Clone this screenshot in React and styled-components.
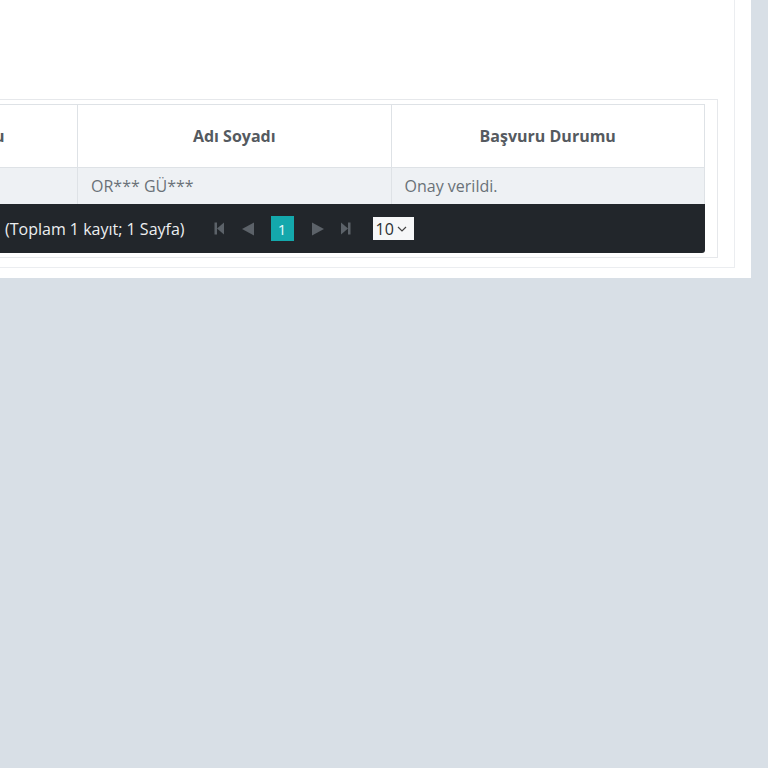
import React from "react";
import styled, { createGlobalStyle } from "styled-components";

const Global = createGlobalStyle`
  html, body { margin: 0; padding: 0; }
  body {
    background: #d8dfe6;
    font-family: "Open Sans", "Noto Sans", sans-serif;
    overflow: hidden;
    width: 768px;
    height: 768px;
  }
`;

const Page = styled.div`
  display: flex;
  align-items: flex-start;
  width: 768px;
  height: 768px;
  overflow: hidden;
`;

const Card = styled.div`
  flex: none;
  width: 976px;
  margin-left: -225px;
  margin-top: -20px;
  background: #fff;
  padding: 0 16px 10px 16px;
  box-sizing: border-box;
`;

const Inner = styled.div`
  border-right: 1px solid #ebedf0;
  border-bottom: 1px solid #ebedf0;
  padding: 119px 16px 9px 16px;
`;

const Wrapper = styled.div`
  border: 1px solid #e6e8eb;
  padding: 4px 12px 4px 12px;
`;

const Table = styled.table`
  width: 100%;
  border-collapse: collapse;
  table-layout: fixed;
  font-size: 16px;
`;

const Th = styled.th`
  width: ${(p) => p.$w || "auto"};
  height: 62px;
  border: 1px solid #dee2e6;
  color: #555a60;
  font-weight: 700;
  font-size: 16px;
  text-align: center;
  padding: 0 12px;
  white-space: nowrap;
  overflow: hidden;
`;

const Td = styled.td`
  height: 36px;
  background: #eef1f4;
  border: 1px solid #dee2e6;
  border-bottom: none;
  color: #6a7178;
  text-align: left;
  padding: 0 13px;
  white-space: nowrap;
`;

const Footer = styled.div`
  background: #22262b;
  height: 49px;
  border-radius: 0 0 3px 3px;
  display: flex;
  align-items: center;
  padding-left: 185px;
  color: #eceef0;
  font-size: 16px;
`;

const Summary = styled.span`
  margin-right: 29px;
`;

const Pager = styled.div`
  display: flex;
  align-items: center;
`;

const NavBtn = styled.span`
  display: inline-flex;
  align-items: center;
  justify-content: center;
  width: ${(p) => p.$w}px;
  margin-right: ${(p) => p.$mr}px;
  color: #5c6269;
`;

const PageBox = styled.span`
  width: 23px;
  height: 25px;
  background: #14a8ac;
  color: #e8fbfb;
  font-size: 15px;
  display: inline-flex;
  align-items: center;
  justify-content: center;
  margin-right: 17px;
`;

const Select = styled.span`
  margin-left: 22px;
  width: 41px;
  height: 23px;
  box-sizing: border-box;
  background: #f6f7f8;
  color: #2b2f33;
  font-size: 16px;
  display: inline-flex;
  align-items: center;
  padding-left: 3px;
  gap: 3px;
`;

const FirstIcon = () => (
  <svg width="11" height="13" viewBox="0 0 11 13">
    <rect x="0.5" y="0.5" width="2.5" height="12" fill="currentColor" />
    <path d="M10 0.5 L3 6.5 L10 12.5 Z" fill="currentColor" />
  </svg>
);
const PrevIcon = () => (
  <svg width="14" height="14" viewBox="0 0 14 14">
    <path d="M13 0.5 L1 7 L13 13.5 Z" fill="currentColor" />
  </svg>
);
const NextIcon = () => (
  <svg width="14" height="14" viewBox="0 0 14 14">
    <path d="M1 0.5 L13 7 L1 13.5 Z" fill="currentColor" />
  </svg>
);
const LastIcon = () => (
  <svg width="11" height="13" viewBox="0 0 11 13">
    <path d="M1 0.5 L8 6.5 L1 12.5 Z" fill="currentColor" />
    <rect x="8" y="0.5" width="2.5" height="12" fill="currentColor" />
  </svg>
);
const Chevron = () => (
  <svg width="10" height="6" viewBox="0 0 10 6">
    <path d="M1 1 L5 5 L9 1" fill="none" stroke="#444" strokeWidth="1.2" />
  </svg>
);

export default function App() {
  return (
    <>
      <Global />
      <Page>
        <Card>
          <Inner>
            <Wrapper>
              <Table>
                <thead>
                  <tr>
                    <Th $w="232px">Başvuru Kodu</Th>
                    <Th>Adı Soyadı</Th>
                    <Th>Başvuru Durumu</Th>
                  </tr>
                </thead>
                <tbody>
                  <tr>
                    <Td>1</Td>
                    <Td>OR*** GÜ***</Td>
                    <Td>Onay verildi.</Td>
                  </tr>
                </tbody>
              </Table>
              <Footer>
                <Summary>(Toplam 1 kayıt; 1 Sayfa)</Summary>
                <Pager>
                  <NavBtn $w={11} $mr={16}><FirstIcon /></NavBtn>
                  <NavBtn $w={14} $mr={16}><PrevIcon /></NavBtn>
                  <PageBox>1</PageBox>
                  <NavBtn $w={14} $mr={15}><NextIcon /></NavBtn>
                  <NavBtn $w={11} $mr={0}><LastIcon /></NavBtn>
                  <Select>10<Chevron /></Select>
                </Pager>
              </Footer>
            </Wrapper>
          </Inner>
        </Card>
      </Page>
    </>
  );
}
